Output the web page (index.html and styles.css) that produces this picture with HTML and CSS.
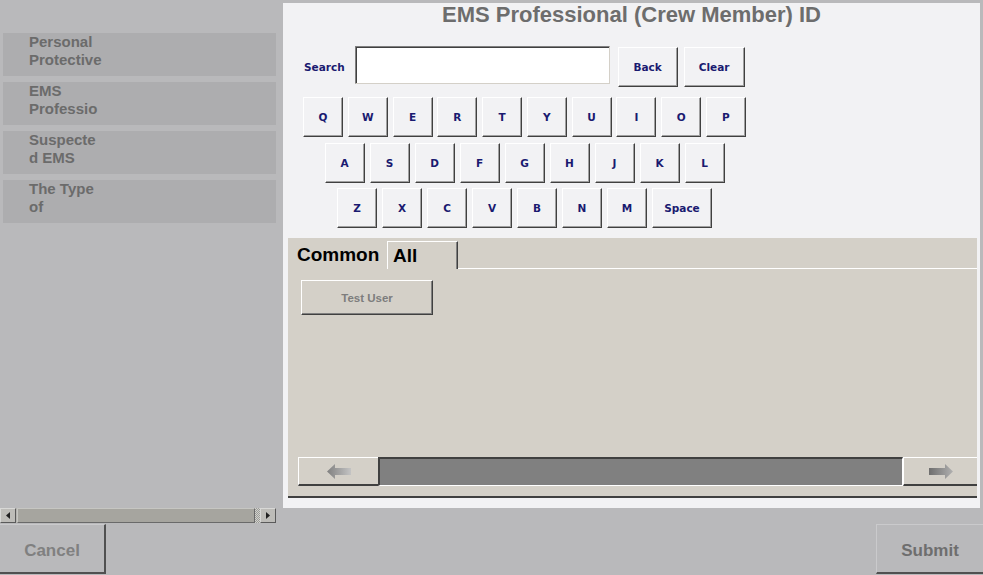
FILE: index.html
```html
<!DOCTYPE html>
<html lang="en">
<head>
    <meta charset="UTF-8">
    <meta name="viewport" content="width=device-width, initial-scale=1.0">
    <title>EMS Professional (Crew Member) ID</title>
    <link rel="stylesheet" href="styles.css">
</head>
<body>

<div class="screen">
    <div class="main">
        <div class="sidebar">
            <div class="side-list">
                <div class="side-item">Personal<br>Protective</div>
                <div class="side-item">EMS<br>Professio</div>
                <div class="side-item">Suspecte<br>d EMS</div>
                <div class="side-item">The Type<br>of</div>
            </div>
            <div class="hscroll">
                <div class="hs-btn">
                    <svg width="4" height="7" viewBox="0 0 4 7"><polygon points="0,3.5 4,0 4,7" fill="#202020"/></svg>
                </div>
                <div class="hs-thumb"></div>
                <div class="hs-hatch"></div>
                <div class="hs-btn">
                    <svg width="4" height="7" viewBox="0 0 4 7"><polygon points="4,3.5 0,0 0,7" fill="#202020"/></svg>
                </div>
            </div>
        </div>

        <div class="panel">
            <h1 class="title">EMS Professional (Crew Member) ID</h1>

            <div class="search-row">
                <span class="search-label">Search</span>
                <input class="search-input" type="text">
                <button class="key key-back">Back</button>
                <button class="key key-clear">Clear</button>
            </div>

            <div class="keyboard">
                <div class="kb-row kb-top">
                    <button class="key">Q</button>
                    <button class="key">W</button>
                    <button class="key">E</button>
                    <button class="key">R</button>
                    <button class="key">T</button>
                    <button class="key">Y</button>
                    <button class="key">U</button>
                    <button class="key">I</button>
                    <button class="key">O</button>
                    <button class="key">P</button>
                </div>
                <div class="kb-row">
                    <button class="key">A</button>
                    <button class="key">S</button>
                    <button class="key">D</button>
                    <button class="key">F</button>
                    <button class="key">G</button>
                    <button class="key">H</button>
                    <button class="key">J</button>
                    <button class="key">K</button>
                    <button class="key">L</button>
                </div>
                <div class="kb-row">
                    <button class="key">Z</button>
                    <button class="key">X</button>
                    <button class="key">C</button>
                    <button class="key">V</button>
                    <button class="key">B</button>
                    <button class="key">N</button>
                    <button class="key">M</button>
                    <button class="key key-space">Space</button>
                </div>
            </div>

            <div class="tabs">
                <div class="tab-strip">
                    <div class="tab tab-active">Common</div>
                    <div class="tab tab-all">All</div>
                    <div class="tab-fill"></div>
                </div>
                <div class="tab-page">
                    <button class="user-btn">Test User</button>
                </div>
                <div class="pager">
                    <div class="pager-btn">
                        <svg width="24" height="15" viewBox="0 0 24 15">
                            <defs>
                                <linearGradient id="gl" x1="0" y1="0" x2="1" y2="0">
                                    <stop offset="0" stop-color="#808080"/>
                                    <stop offset="1" stop-color="#c4c4c4"/>
                                </linearGradient>
                            </defs>
                            <polygon points="0,7.5 8,0 8,4 24,4 24,11 8,11 8,15" fill="url(#gl)"/>
                        </svg>
                    </div>
                    <div class="pager-track"></div>
                    <div class="pager-btn pager-next">
                        <svg width="24" height="15" viewBox="0 0 24 15">
                            <defs>
                                <linearGradient id="gr" x1="0" y1="0" x2="1" y2="0">
                                    <stop offset="0" stop-color="#6e6e6e"/>
                                    <stop offset="1" stop-color="#b0b0b0"/>
                                </linearGradient>
                            </defs>
                            <polygon points="24,7.5 16,0 16,4 0,4 0,11 16,11 16,15" fill="url(#gr)"/>
                        </svg>
                    </div>
                </div>
            </div>
        </div>
    </div>

    <div class="footer">
        <button class="foot-btn cancel">Cancel</button>
        <button class="foot-btn submit">Submit</button>
    </div>
</div>

</body>
</html>
```

FILE: styles.css
```css
body {
    margin: 0;
    background-color: #b9b9bb;
    font-family: "Liberation Sans", Arial, sans-serif;
    overflow: hidden;
}
.screen {
    width: 983px;
    height: 575px;
}
.main {
    display: flex;
    height: 524px;
}

/* left list */
.sidebar {
    width: 283px;
    display: flex;
    flex-direction: column;
}
.side-list {
    padding-top: 33px;
    display: flex;
    flex-direction: column;
    gap: 6px;
}
.side-item {
    margin-left: 3px;
    width: 273px;
    height: 43px;
    box-sizing: border-box;
    padding: 0 0 0 26px;
    background-color: #adadaf;
    color: #6b6b6b;
    font-weight: bold;
    font-size: 15px;
    line-height: 17.5px;
}
.hscroll {
    margin-top: auto;
    margin-bottom: 1px;
    width: 276px;
    height: 15px;
    display: flex;
    background-color: #b5b4b0;
}
.hs-btn {
    width: 16px;
    box-sizing: border-box;
    border: 1px solid;
    border-color: #d8d8d6 #5a5a5a #5a5a5a #d8d8d6;
    background-color: #bdbcb8;
    display: flex;
    align-items: center;
    justify-content: center;
}
.hs-thumb {
    flex: 1;
    margin-left: 1px;
    background-color: #a6a59f;
    border: 1px solid;
    border-color: #c6c6c2 #6a6a6a #6a6a6a #c6c6c2;
}
.hs-hatch {
    width: 5px;
    background: repeating-conic-gradient(#9c9c98 0 25%, #d2d2ce 0 50%) 0 0 / 2px 2px;
}

/* dialog panel */
.panel {
    width: 697px;
    height: 505px;
    margin-top: 3px;
    background-color: #f2f2f4;
    display: flex;
    flex-direction: column;
}
.title {
    margin: 0;
    text-align: center;
    font-size: 22px;
    line-height: 24px;
    color: #6d6d6d;
    font-weight: bold;
}
.search-row {
    display: flex;
    align-items: flex-start;
    margin-top: 19px;
    padding-left: 21px;
    height: 41px;
}
.search-label {
    align-self: center;
    margin-right: 10px;
    color: #1a1a70;
    font: bold 10.5px "DejaVu Sans", sans-serif;
}
.search-input {
    width: 255px;
    height: 38px;
    box-sizing: border-box;
    margin: 0;
    padding: 0;
    background-color: #fff;
    border: 1px solid;
    border-color: #808080 #d4d0c8 #d4d0c8 #808080;
    box-shadow: inset 1px 1px #404040;
}
.key {
    width: 40px;
    height: 40px;
    box-sizing: border-box;
    margin: 0;
    padding: 0;
    background-color: #f2f2f4;
    border: 1px solid;
    border-color: #fff #404040 #404040 #fff;
    box-shadow: inset -1px -1px #a0a0a0;
    color: #1a1a70;
    font: bold 10.5px "DejaVu Sans", sans-serif;
}
.key-back {
    width: 60px;
    margin: 1px 0 0 8px;
}
.key-clear {
    width: 61px;
    margin: 1px 0 0 6px;
}
.keyboard {
    margin: 10px 0 0 20px;
    width: 443px;
    display: flex;
    flex-direction: column;
    gap: 5.5px;
}
.kb-row {
    display: flex;
    justify-content: center;
    gap: 5px;
}
.kb-top {
    justify-content: space-between;
    gap: 0;
}
.key-space {
    width: 60px;
}

/* tab control */
.tabs {
    flex: 1;
    margin: 10px 3px 10px 5px;
    background-color: #d4d0c8;
    border-bottom: 2px solid #404040;
    display: flex;
    flex-direction: column;
}
.tab-strip {
    display: flex;
    height: 31px;
}
.tab {
    box-sizing: border-box;
    font-size: 19px;
    font-weight: bold;
    line-height: 22px;
    color: #000;
}
.tab-active {
    width: 99px;
    padding: 6px 0 0 9px;
}
.tab-all {
    width: 71px;
    margin-top: 3px;
    padding: 3px 0 0 5px;
    border-top: 1px solid #fff;
    border-left: 1px solid #fff;
    border-right: 1px solid #404040;
    box-shadow: inset -1px 0 #808080;
}
.tab-fill {
    flex: 1;
    border-bottom: 1px solid #fff;
}
.tab-page {
    flex: 1;
    padding: 11px 0 0 13px;
}
.user-btn {
    width: 132px;
    height: 35px;
    margin: 0;
    padding: 0;
    background-color: #d4d0c8;
    border: 1px solid;
    border-color: #fff #404040 #404040 #fff;
    box-shadow: inset -1px -1px #808080;
    color: #7d7d7d;
    font: bold 11.5px "Liberation Sans", Arial, sans-serif;
}
.pager {
    display: flex;
    height: 29px;
    margin: 0 0 10px 10px;
}
.pager-btn {
    width: 80px;
    box-sizing: border-box;
    border-top: 1px solid #fff;
    border-left: 1px solid #fff;
    border-bottom: 2px solid #404040;
    display: flex;
    align-items: center;
    justify-content: center;
}
.pager-track {
    flex: 1;
    background-color: #808080;
    border-top: 2px solid #404040;
    border-left: 2px solid #404040;
    border-bottom: 1px solid #fff;
    border-right: 1px solid #fff;
}
.pager-next {
    width: 74px;
}

/* bottom buttons */
.footer {
    display: flex;
    justify-content: space-between;
    height: 51px;
}
.foot-btn {
    width: 106px;
    height: 50px;
    margin: 0;
    padding: 4px 0 0;
    background-color: #b9b9bb;
    border: none;
    border-top: 1px solid #cacacc;
    border-right: 2px solid #505050;
    border-bottom: 2px solid #505050;
    font: bold 17px "Liberation Sans", Arial, sans-serif;
    color: #808080;
}
.submit {
    width: 107px;
    border-right: none;
    border-left: 1px solid #cacacc;
    color: #6e6e6e;
}
```
